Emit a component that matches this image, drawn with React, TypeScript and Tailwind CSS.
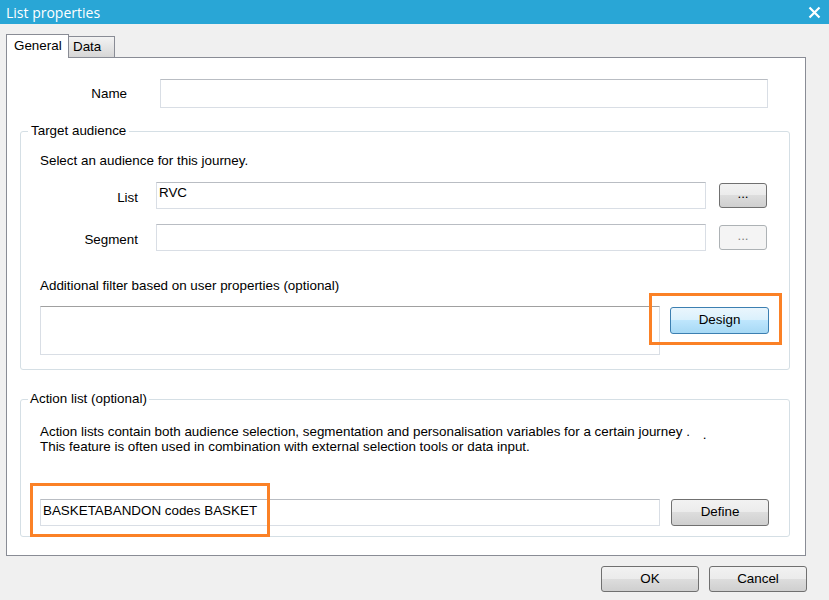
import React from 'react';

const font = { fontFamily: '"Liberation Sans", Arial, sans-serif' };

const Btn: React.FC<{ children: React.ReactNode; className?: string; disabled?: boolean }> = ({ children, className = '', disabled }) => (
  <div
    className={`flex items-center justify-center rounded-[3px] border text-[13.4px] ${
      disabled
        ? 'border-[#adb2b5] bg-[#f4f4f4] text-[#838383]'
        : 'border-[#707070] bg-[linear-gradient(#f2f2f2_0%,#ebebeb_50%,#dddddd_50%,#cfcfcf_100%)] text-black'
    } ${className}`}
  >
    {children}
  </div>
);

const TextBox: React.FC<{ value?: string; className?: string }> = ({ value, className = '' }) => (
  <div className={`border border-[#d9dee5] border-t-[#b9bdc3] bg-white px-[2px] text-[13.4px] text-black ${className}`}>
    {value}
  </div>
);

export default function App() {
  return (
    <div className="w-[829px] h-[600px] bg-[#f0f0f0] flex flex-col overflow-hidden" style={font}>
      {/* title bar */}
      <div className="h-[24px] bg-[#29a6d6] flex items-center justify-between pl-[6px] pr-[8px]">
        <span className="text-white text-[14px]" style={{ fontFamily: '"Open Sans", "Noto Sans", sans-serif' }}>List properties</span>
        <svg width="13" height="13" viewBox="0 0 13 13">
          <path d="M1.5 1.5 L11.5 11.5 M11.5 1.5 L1.5 11.5" stroke="white" strokeWidth="2.2" />
        </svg>
      </div>

      <div className="pl-[6px] pr-[23px] pt-[9px]">
        {/* tabs */}
        <div className="flex items-end h-[24px]">
          <div className="h-[24px] w-[63px] bg-white border border-b-0 border-[#898c95] flex items-center pl-[7px] text-[13.4px] -mb-px relative z-10">
            General
          </div>
          <div className="h-[21px] w-[46px] border border-l-0 border-b-0 border-[#898c95] bg-[linear-gradient(#f3f3f3,#d6d6d6)] flex items-center pl-[4px] text-[13.4px]">
            Data
          </div>
        </div>

        {/* panel */}
        <div className="h-[499px] w-[800px] bg-white border border-[#898c95] pt-[21px] pl-[13px]">
          <div className="flex items-center h-[29px]">
            <div className="w-[107px] text-right text-[13.4px] pt-[2px]">Name</div>
            <TextBox className="ml-[33px] w-[608px] h-[29px]" />
          </div>

          <fieldset className="mt-[15px] w-[770px] border border-[#d5dfe5] rounded-[3px] pl-[19px] pb-[14px]">
            <legend className="ml-[-12px] px-[3px] text-[13.4px] leading-[16px]">Target audience</legend>
            <div className="mt-[14px] text-[13.4px] leading-[16px]">Select an audience for this journey.</div>
            <div className="mt-[13px] flex items-center">
              <div className="w-[98px] text-right text-[13.4px] pt-[5px]">List</div>
              <TextBox value="RVC" className="ml-[18px] w-[550px] h-[27px] leading-[20px]" />
              <Btn className="ml-[13px] w-[48px] h-[25px] pb-[3px]">...</Btn>
            </div>
            <div className="mt-[15px] flex items-center">
              <div className="w-[98px] text-right text-[13.4px] pt-[5px]">Segment</div>
              <TextBox className="ml-[18px] w-[550px] h-[27px]" />
              <Btn disabled className="ml-[13px] w-[48px] h-[25px] pb-[3px]">...</Btn>
            </div>
            <div className="mt-[27px] text-[13.4px] leading-[16px]">Additional filter based on user properties (optional)</div>
            <div className="mt-[12px] flex items-start">
              <div className="w-[620px] h-[49px] border border-[#d9dee5] border-t-[#a0a0a0]" />
              <div className="relative ml-[10px] mt-[1px]">
                <div className="w-[99px] h-[27px] rounded-[3px] border border-[#3c7fb1] bg-[linear-gradient(#eaf6fd_0%,#d9f0fc_50%,#bee6fd_50%,#a7d9f5_100%)] flex items-center justify-center text-[13.4px]">
                  Design
                </div>
                <div className="absolute left-[-21px] top-[-14px] w-[133px] h-[52px] border-[3px] border-[#fb8126]" />
              </div>
            </div>
          </fieldset>

          <fieldset className="mt-[21px] w-[770px] border border-[#d5dfe5] rounded-[3px] pl-[19px] pb-[10px]">
            <legend className="ml-[-12px] px-[2px] text-[13.4px] leading-[16px]">Action list (optional)</legend>
            <div className="mt-[17px] text-[13.4px] leading-[15px]">
              Action lists contain both audience selection, segmentation and personalisation variables for a certain journey <span>.</span>
              <span className="ml-[13px] relative top-[3px]">.</span>
              <br />
              This feature is often used in combination with external selection tools or data input.
            </div>
            <div className="mt-[45px] flex items-center">
              <div className="relative">
                <TextBox value="BASKETABANDON codes BASKET" className="w-[620px] h-[27px] leading-[22px]" />
                <div className="absolute left-[-10px] top-[-16px] w-[240px] h-[54px] border-[3px] border-[#fb8126]" />
              </div>
              <Btn className="ml-[11px] w-[98px] h-[27px]">Define</Btn>
            </div>
          </fieldset>
        </div>
      </div>

      {/* footer */}
      <div className="flex justify-end gap-[10px] pr-[22px] pt-[10px]">
        <Btn className="w-[98px] h-[26px]">OK</Btn>
        <Btn className="w-[98px] h-[26px]">Cancel</Btn>
      </div>
    </div>
  );
}
